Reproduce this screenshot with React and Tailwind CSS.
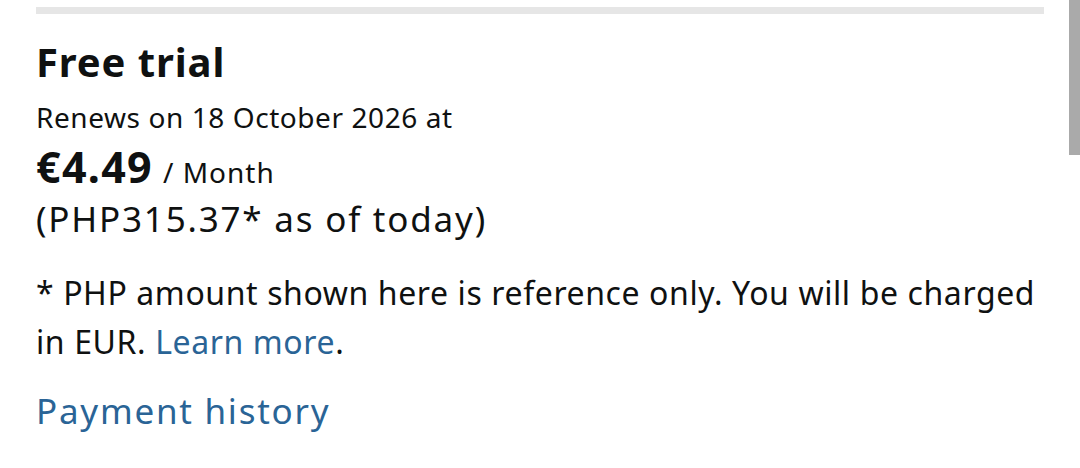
export default function App() {
  return (
    <div className="relative h-[468px] w-[1080px] overflow-hidden bg-white text-[#0f1111]" style={{ fontFamily: '"Noto Sans", "Open Sans", sans-serif' }}>
      {/* scroll thumb */}
      <div className="absolute right-0 top-0 h-[155px] w-[11px] bg-[#aaaaaa]" />

      <div className="px-9">
        <div className="mt-[7px] h-[7px] w-full bg-[#e6e6e6]" />

        <h2 className="mt-[24px] text-[40px] font-bold leading-[48px] tracking-[0.9px]">Free trial</h2>

        <p className="mt-[13px] text-[28px] leading-[36px] tracking-[0.57px]">Renews on 18 October 2026 at</p>

        <div className="mt-[6px] text-[43px] font-bold leading-[52px] tracking-[1.3px]">
          €4.49
          <span className="ml-[10px] text-[28px] font-normal leading-none tracking-[1px]">/ Month</span>
        </div>

        <p className="mt-[5px] text-[35px] leading-[42px] tracking-[1.8px]">(PHP315.37* as of today)</p>

        <p className="mt-[28px] text-[32px] leading-[49px] tracking-[0.6px]">
          * PHP amount shown here is reference only. You will be charged in EUR.{' '}
          <a href="#" className="text-[#2a6496]">Learn more</a>.
        </p>

        <a href="#" className="mt-[23px] block text-[35px] leading-[44px] tracking-[1.75px] text-[#2a6496]">Payment history</a>
      </div>
    </div>
  );
}
